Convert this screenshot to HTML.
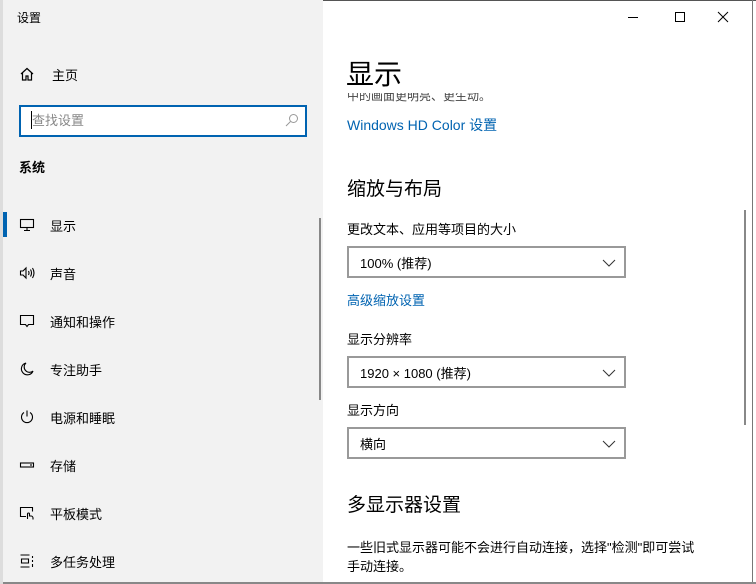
<!DOCTYPE html>
<html><head><meta charset="utf-8"><style>
*{margin:0;padding:0;box-sizing:border-box}
body{width:756px;height:584px;background:#fff;font-family:"Liberation Sans","Noto Sans CJK SC",sans-serif;position:relative;overflow:hidden;color:#000}
.side{position:absolute;left:3px;top:0;width:320px;height:582px;background:#f2f2f2}
.t{position:absolute;white-space:nowrap}
.nav{position:absolute;left:19px;font-size:13px}
.nav svg{position:absolute;left:0;top:0}
.nav span{position:absolute;left:31px;top:-1px;white-space:nowrap}
.sel{position:absolute;border:2px solid #999;width:279px;height:32px;background:#fff;font-size:13px}
.sel span{position:absolute;left:11px;top:5px}
.sel svg{position:absolute;right:8px;top:11px}
a{color:#0063b1;text-decoration:none}
</style></head><body>
<div style="position:absolute;left:0;top:0;width:756px;height:1px;background:#555"></div>
<div style="position:absolute;left:752px;top:0;width:1px;height:584px;background:#777"></div>
<div style="position:absolute;left:0;top:582px;width:756px;height:2px;background:#888"></div>
<div style="position:absolute;left:0;top:0;width:3px;height:584px;background:#ddd"></div>
<div class="side"></div>
<div class="t" style="left:17px;top:9px;font-size:12px">设置</div>
<div class="nav" style="top:66px"><svg width="16" height="16" viewBox="0 0 16 16" fill="none" stroke="#000" stroke-width="1.2"><path d="M2 8L8 2.5 14 8M3.5 7v7h3.5v-4h2v4h3.5V7"/></svg><span style="left:33px">主页</span></div>
<div style="position:absolute;left:19px;top:105px;width:288px;height:32px;border:2px solid #0063b1;background:#fff"></div>
<div style="position:absolute;left:31px;top:111px;width:1px;height:18px;background:#000"></div>
<div class="t" style="left:32px;top:110px;font-size:13px;color:#888">查找设置</div>
<svg style="position:absolute;left:285px;top:113px" width="14" height="14" viewBox="0 0 14 14" fill="none" stroke="#999" stroke-width="1"><circle cx="8.5" cy="5.5" r="4"/><path d="M5.5 8.5L1 13"/></svg>
<div class="t" style="left:19px;top:157px;font-size:13px;font-weight:bold">系统</div>
<div style="position:absolute;left:3px;top:212px;width:4px;height:25px;background:#0063b1"></div>
<div style="position:absolute;left:319px;top:218px;width:2px;height:182px;background:#888"></div>
<div class="nav" style="top:217px"><svg width="16" height="16" viewBox="0 0 16 16" fill="none" stroke="#000" stroke-width="1.1"><rect x="1.5" y="2.5" width="13" height="8"/><path d="M8 10.5v3M5 13.5h6"/></svg><span>显示</span></div>
<div class="nav" style="top:265px"><svg width="16" height="16" viewBox="0 0 16 16" fill="none" stroke="#000" stroke-width="1.1"><path d="M1.5 6h2.5l3-3v10l-3-3H1.5z M9.5 6q1 2 0 4 M11.5 4.5q2 3.5 0 7 M13.5 3q3 5 0 10"/></svg><span>声音</span></div>
<div class="nav" style="top:313px"><svg width="16" height="16" viewBox="0 0 16 16" fill="none" stroke="#000" stroke-width="1.1"><path d="M1.5 2.5h13v9h-5l-1.5 2-1.5-2h-5z"/></svg><span>通知和操作</span></div>
<div class="nav" style="top:361px"><svg width="16" height="16" viewBox="0 0 16 16" fill="none" stroke="#000" stroke-width="1.1"><path d="M7 2a6 6 0 1 0 7 8 5 5 0 0 1-7-8z"/></svg><span>专注助手</span></div>
<div class="nav" style="top:409px"><svg width="16" height="16" viewBox="0 0 16 16" fill="none" stroke="#000" stroke-width="1.1"><path d="M8 1.5v6M5 3.5a5.5 5.5 0 1 0 6 0"/></svg><span>电源和睡眠</span></div>
<div class="nav" style="top:457px"><svg width="16" height="16" viewBox="0 0 16 16" fill="none" stroke="#000" stroke-width="1.1"><rect x="1.5" y="6" width="13" height="4"/><path d="M11 8h2"/></svg><span>存储</span></div>
<div class="nav" style="top:505px"><svg width="16" height="16" viewBox="0 0 16 16" fill="none" stroke="#000" stroke-width="1.1"><path d="M7 11.5H1.5v-9h12v4M8.5 14v-5a1 1 0 0 1 2 0v2h1.5a2 2 0 0 1 2 2v1.5"/></svg><span>平板模式</span></div>
<div class="nav" style="top:553px"><svg width="16" height="16" viewBox="0 0 16 16" fill="none" stroke="#000" stroke-width="1.1"><path d="M1.5 2h9M1.5 14h9M2.5 6h7v4h-7zM13.5 3v2M13.5 7v2M13.5 11v3"/></svg><span>多任务处理</span></div>
<svg style="position:absolute;left:626px;top:10px" width="110" height="14" viewBox="0 0 110 14" fill="none" stroke="#000" stroke-width="1"><path d="M2 7.5h10M49.5 2.5h9v9h-9zM92 2l10 10M102 2L92 12"/></svg>
<div class="t" style="left:346px;top:53px;font-size:28px">显示</div>
<div class="t" style="left:347px;top:93px;font-size:12px;color:#444;height:10px;overflow:hidden;line-height:6px">中的画面更明亮、更生动。</div>
<div class="t" style="left:347px;top:115px;font-size:14px"><a>Windows HD Color 设置</a></div>
<div class="t" style="left:347px;top:174px;font-size:19px">缩放与布局</div>
<div class="t" style="left:347px;top:219px;font-size:13px">更改文本、应用等项目的大小</div>
<div class="sel" style="left:347px;top:246px"><span>100% (推荐)</span><svg width="14" height="8" viewBox="0 0 14 8" fill="none" stroke="#333"><path d="M1 1l6 6 6-6"/></svg></div>
<div class="t" style="left:347px;top:290px;font-size:13px"><a>高级缩放设置</a></div>
<div class="t" style="left:347px;top:329px;font-size:13px">显示分辨率</div>
<div class="sel" style="left:347px;top:356px"><span>1920 × 1080 (推荐)</span><svg width="14" height="8" viewBox="0 0 14 8" fill="none" stroke="#333"><path d="M1 1l6 6 6-6"/></svg></div>
<div class="t" style="left:347px;top:400px;font-size:13px">显示方向</div>
<div class="sel" style="left:347px;top:427px"><span>横向</span><svg width="14" height="8" viewBox="0 0 14 8" fill="none" stroke="#333"><path d="M1 1l6 6 6-6"/></svg></div>
<div class="t" style="left:347px;top:490px;font-size:19px">多显示器设置</div>
<div class="t" style="left:347px;top:538px;font-size:13px;line-height:19px">一些旧式显示器可能不会进行自动连接，选择"检测"即可尝试<br>手动连接。</div>
<div style="position:absolute;left:744px;top:210px;width:2px;height:215px;background:#888"></div>
</body></html>
